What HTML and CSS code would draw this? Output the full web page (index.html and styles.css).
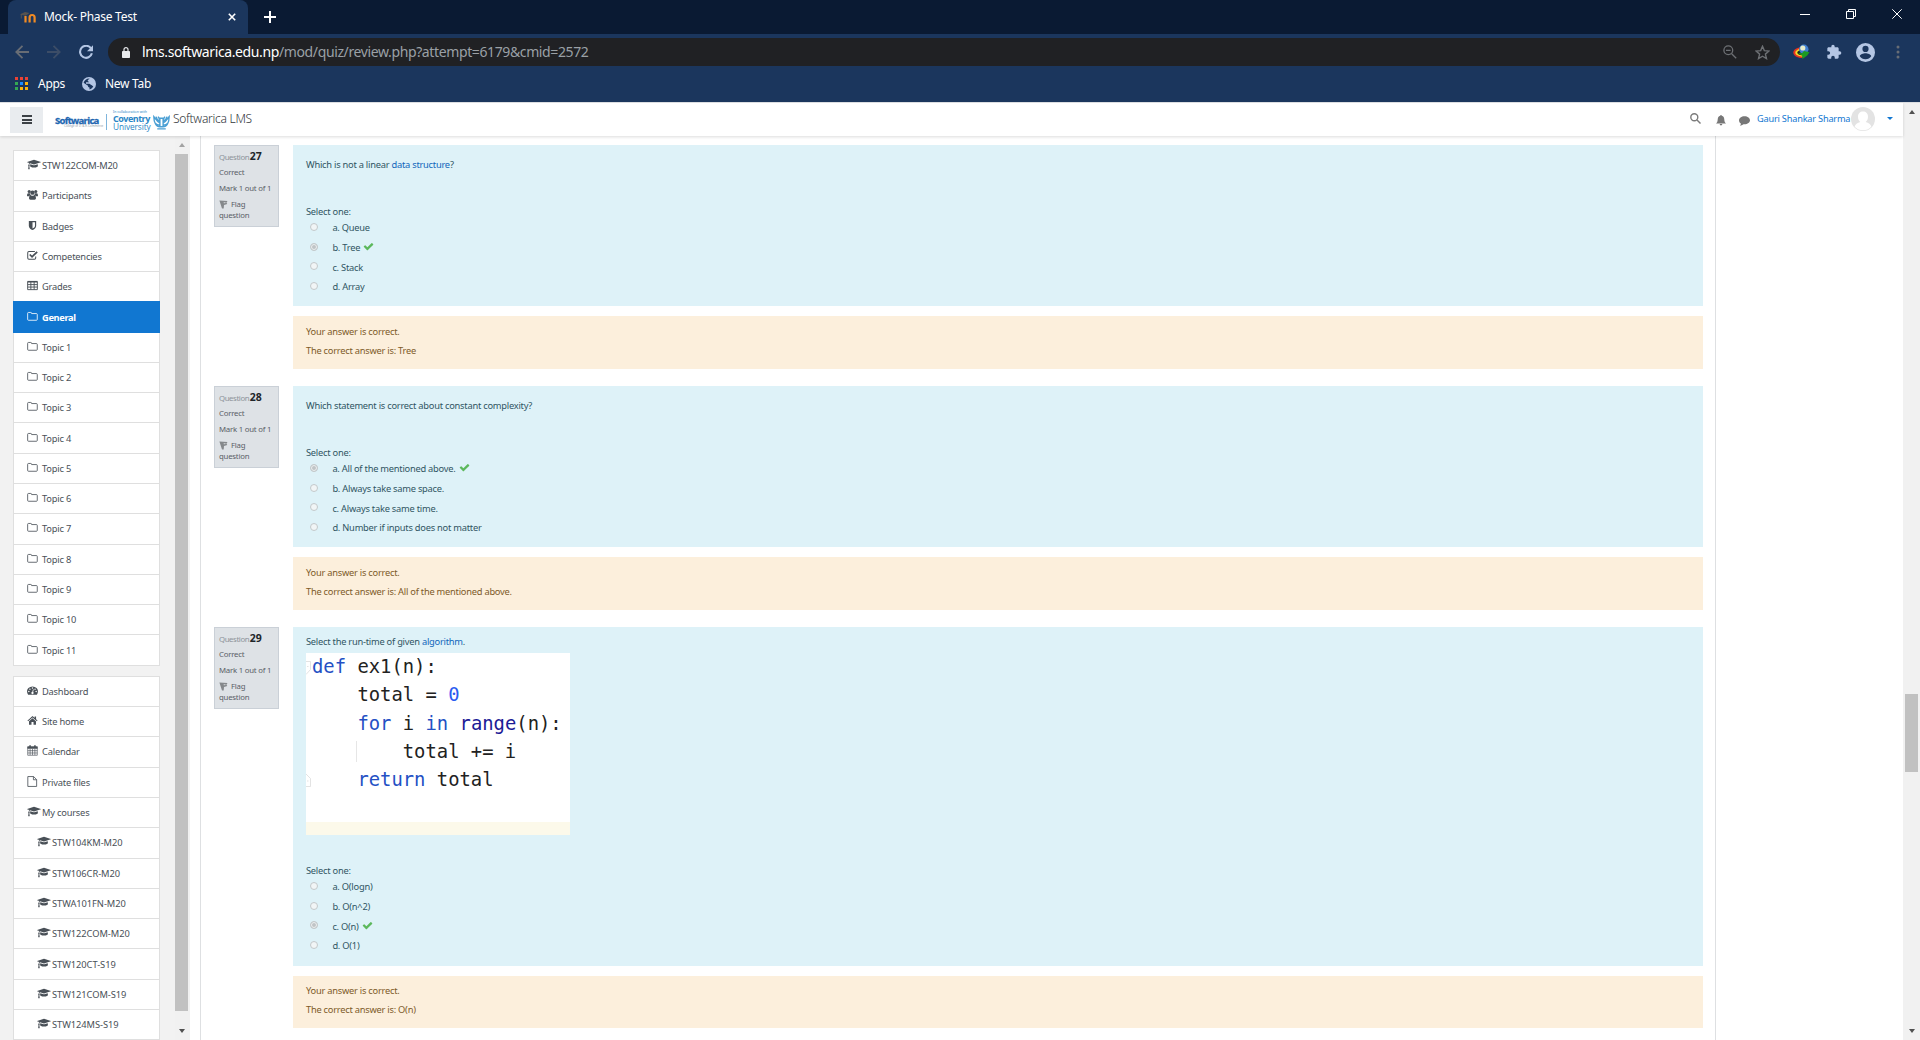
FILE: index.html
```html
<!DOCTYPE html>
<html lang="en">
<head>
<meta charset="utf-8">
<title>Mock- Phase Test</title>
<link rel="stylesheet" href="styles.css">
</head>
<body>
<svg class="sprite" aria-hidden="true">
  <symbol id="cap" viewBox="0 0 2304 1792"><path d="M1774 836l18 316q4 69-82 128t-235 93.500-323 34.500-323-34.500-235-93.500-82-128l18-316 574 181q22 7 48 7t48-7zm530-324q0 23-22 31l-1120 352q-4 1-10 1t-10-1l-652-206q-43 34-71 111.500t-34 178.500q63 36 63 109 0 69-58 107l58 433q2 14-8 25-9 11-24 11h-192q-15 0-24-11-10-11-8-25l58-433q-58-38-58-107 0-73 65-111 11-207 98-330l-333-104q-22-8-22-31t22-31l1120-352q4-1 10-1t10 1l1120 352q22 8 22 31z"/></symbol>
  <symbol id="users" viewBox="0 0 12 12"><circle cx="2.400" cy="2.700" r="1.700"/><circle cx="9.600" cy="2.700" r="1.700"/><circle cx="6" cy="4" r="2.400"/><path d="M0 7.500C0 5.500.6 4.700 1.400 4.700h1.900c0 1 .5 1.800 1 2.200C3 7 2.600 7.500 2.300 8H.9C.3 8 0 7.900 0 7.500zM12 7.500c0-2-.6-2.800-1.400-2.800H8.700c0 1-.5 1.800-1 2.200 1.300.1 1.700.6 2 1.100h1.400c.6 0 .9-.1.900-.5zM2.200 10.200C2.200 8 3 6.700 4.300 6.700c1 .8 2.400.8 3.400 0 1.300 0 2.100 1.300 2.100 3.500 0 .9-.6 1.500-1.500 1.500H3.700c-.9 0-1.500-.6-1.500-1.500z"/></symbol>
  <symbol id="shield" viewBox="0 0 12 12"><path fill-rule="evenodd" d="M2 1h8v5.500c0 2-2 3.700-4 4.500-2-.8-4-2.500-4-4.500zM6 2.400v7C7.400 8.700 8.700 7.600 8.700 6.500V2.400z"/></symbol>
  <symbol id="checksq" viewBox="0 0 12 12"><path fill="none" stroke="currentColor" stroke-width="1.100" d="M9.500 7v1.800c0 .8-.5 1.300-1.300 1.300H2.100C1.300 10.100.8 9.600.8 8.800V2.900c0-.8.500-1.300 1.300-1.300h6.500"/><path fill="none" stroke="currentColor" stroke-width="1.900" d="M3 4.900l2.500 2.500 5.600-5.400"/></symbol>
  <symbol id="table" viewBox="0 0 12 12"><path fill="none" stroke="currentColor" d="M.7 2h10.600v8.500H.7zM.7 5h10.600M.7 7.700h10.600M4.200 2v8.500M7.800 2v8.500"/><path d="M.5 1h11v1.500H.5z"/></symbol>
  <symbol id="folder" viewBox="0 0 12 12"><path fill="none" stroke="currentColor" stroke-width=".9" d="M.7 2.500c0-.6.300-.9.900-.9h2.500c.6 0 .9.300.9.900v.3h5.300c.6 0 .9.400.9.900v5.500c0 .6-.3.900-.9.900H1.600c-.6 0-.9-.3-.9-.9z"/></symbol>
  <symbol id="gauge" viewBox="0 0 12 12"><path fill-rule="evenodd" d="M1.200 10.500C-.5 8.200-.3 5.300 1.600 3.400a6.200 6.200 0 018.800 0c1.900 1.900 2.100 4.800.4 7.100zM2 6.400a.8.800 0 100 1.600.8.800 0 000-1.600zM3.200 3.700a.8.800 0 100 1.600.8.800 0 000-1.600zM6 2.500a.8.800 0 100 1.600.8.800 0 000-1.600zM8.800 3.700a.8.800 0 100 1.600.8.800 0 000-1.600zM10 6.400a.8.800 0 100 1.600.8.800 0 000-1.600zM6.600 4.700l-.9 2.800a1.200 1.200 0 101 .2l.6-2.800z"/></symbol>
  <symbol id="home" viewBox="0 0 12 12"><path d="M6 1.200l5.500 4.700-.7.800L6 2.700l-4.800 4-.7-.8L2.200 4.500zM8.300 1.500h1.600v3L8.300 3.200z"/><path d="M2.200 6.700L6 3.500l3.800 3.200v3.800H7.100V7.700H4.900v2.800H2.200z"/></symbol>
  <symbol id="calendar" viewBox="0 0 12 12"><path fill="none" stroke="currentColor" stroke-width=".7" d="M.8 2h10.400v9.200H.8zM.8 6.200h10.400M.8 8.700h10.400M3.400 4v7M6 4v7M8.600 4v7"/><path d="M.5 1.700h11v2.300H.5zM2.500.2h1.700v2.500H2.500zM7.800.2h1.700v2.500H7.800z"/></symbol>
  <symbol id="file" viewBox="0 0 12 12"><path fill="none" stroke="currentColor" stroke-width=".9" d="M.9.600h6.300l3.300 3.300v7.500H.9zM7 .6v3.500h3.500"/></symbol>
  <symbol id="check" viewBox="0 0 1792 1792"><path d="M1671 566q0 40-28 68l-724 724-136 136q-28 28-68 28t-68-28l-136-136-362-362q-28-28-28-68t28-68l136-136q28-28 68-28t68 28l294 295 656-657q28-28 68-28t68 28l136 136q28 28 28 68z"/></symbol>
  <symbol id="flag" viewBox="0 0 9 9"><path fill="#85888b" d="M.4.500l8.100.5-1.100 1.700.9 1.300-3.300 1-.3 3.500H3z"/><path fill="#c3c6c9" d="M4.600 2h2.200l-.6 1.300H4.700z"/></symbol>
</svg>

<header class="chrome">
  <div class="tabstrip">
    <div class="tab">
      <svg class="favicon" viewBox="0 0 16 12"><path fill="none" stroke="#f08a24" stroke-width="2.200" d="M5.500 11.500V5M9.600 11.500V6.500a2.500 2.500 0 015 0v5"/><path fill="#55524f" d="M.2 3.300L5 .9l4.500 1-3.800 2.900L1.800 4v3.500h-1V3.700z"/></svg>
      <span class="tab-title">Mock- Phase Test</span>
      <svg class="tab-close" viewBox="0 0 8 8"><path d="M.8.800l6.400 6.400M7.200.8L.8 7.200"/></svg>
    </div>
    <svg class="newtab" viewBox="0 0 12 12"><path d="M6 0v12M0 6h12"/></svg>
    <div class="winctl">
      <svg viewBox="0 0 10 10"><path d="M0 5.500h10"/></svg>
      <svg viewBox="0 0 10 10"><path d="M.5 2.500h7v7h-7zM2.500 2.500v-2h7v7h-2"/></svg>
      <svg viewBox="0 0 10 10"><path d="M.3.300l9.400 9.400M9.700.3L.3 9.700"/></svg>
    </div>
  </div>
  <div class="toolbar">
    <svg class="nav back" viewBox="0 0 14 14"><path d="M14 7H1.500M7.500.8L1.300 7l6.200 6.200"/></svg>
    <svg class="nav fwd" viewBox="0 0 14 14"><path d="M0 7h12.500M6.500.8L12.700 7l-6.200 6.200"/></svg>
    <svg class="nav reload" viewBox="0 0 14 14"><path d="M11.900 3.200A6 6 0 1012.900 8.300"/><path class="fill" d="M14 .2v6H8z"/></svg>
    <div class="omnibox">
      <svg class="lock" viewBox="0 0 8 11"><path d="M.8 4h6.400c.5 0 .8.300.8.800v5.400c0 .5-.3.800-.8.800H.8c-.5 0-.8-.3-.8-.8V4.800C0 4.300.3 4 .8 4z"/><path class="line" d="M2 4.300V2.600a2 2 0 014 0v1.700"/></svg>
      <span class="url"><b>lms.softwarica.edu.np</b>/mod/quiz/review.php?attempt=6179&amp;cmid=2572</span>
      <svg class="zoomout" viewBox="0 0 14 14"><circle cx="5.300" cy="5.300" r="4.400"/><path d="M3 5.300h4.600M8.700 8.700l4.500 4.500"/></svg>
      <svg class="star" viewBox="0 0 14 14"><path d="M7 1.200l1.700 4 4.300.4-3.300 2.900 1 4.200L7 10.500l-3.700 2.200 1-4.200L1 5.600l4.300-.4z"/></svg>
    </div>
    <svg class="idm" viewBox="0 0 17 16"><path d="M8 3C3 4 0 6 .3 9s5 5 9.200 5" fill="#e53322"/><path d="M8 4.500C4 5.500 2 7 2.300 9s4 3.500 7.700 3.500" fill="#f7dc28"/><path d="M8 6C5.500 6.500 4 7.500 4.300 9S7 11.500 10 11" fill="#182b22"/><circle cx="10.800" cy="5.300" r="4.700" fill="#3f7fd0"/><circle cx="9.800" cy="4" r="2.600" fill="#e6eccb"/><path d="M5 9l4 .2L11 7l5.500 1.200-2.300 3.200L9.500 15l-.3-3.200z" fill="#1d9a21"/></svg>
    <svg class="puzzle" viewBox="0 0 24 24"><path d="M20.500 11H19V7c0-1.100-.9-2-2-2h-4V3.500a2.500 2.500 0 00-5 0V5H4c-1.100 0-2 .9-2 2v3.800h1.500a2.700 2.700 0 010 5.400H2V20c0 1.100.9 2 2 2h3.800v-1.500a2.700 2.700 0 015.400 0V22H17c1.100 0 2-.9 2-2v-4h1.500a2.500 2.500 0 000-5z"/></svg>
    <svg class="person" viewBox="0 0 20 20"><path fill-rule="evenodd" d="M10 0a10 10 0 100 20 10 10 0 000-20zm0 3a3.200 3.200 0 110 6.500A3.200 3.200 0 0110 3zm0 14.200a7 7 0 01-6-3.200c0-2 4-3.100 6-3.100s6 1.100 6 3.100a7 7 0 01-6 3.200z"/></svg>
    <svg class="dots" viewBox="0 0 4 14"><circle cx="2" cy="2" r="1.500"/><circle cx="2" cy="7" r="1.500"/><circle cx="2" cy="12" r="1.500"/></svg>
  </div>
  <div class="bookmarks">
    <svg class="apps" viewBox="0 0 13 13"><path fill="#ea4335" d="M0 0h3v3H0zM5 0h3v3H5zM10 0h3v3h-3z"/><path fill="#34a853" d="M0 5h3v3H0zM0 10h3v3H0z"/><path fill="#1a8cff" d="M5 5h3v3H5z"/><path fill="#fbb30b" d="M10 5h3v3h-3zM5 10h3v3H5zM10 10h3v3h-3z"/></svg>
    <span class="bm-apps">Apps</span>
    <svg class="globe" viewBox="0 0 14 14"><circle cx="7" cy="7" r="7" fill="#b4c6e4"/><path fill="#1b365d" d="M7.500 1.500c-.3 1.200-1.800 1-1.800 2.200 0 .8 1.300.6 1.300 1.600H4v1.500h3.300c1 0 1 1.200 2 1.200.9 0 .8 1 2 1.200-.6 1.600-2 2.800-3.800 3.200V10.500c-1.200 0-1.500-.8-1.500-1.700L1.600 5.800C2.400 3.200 4.700 1.400 7.500 1.500z"/></svg>
    <span>New Tab</span>
  </div>
</header>

<div class="viewport">
  <div class="page">
    <nav class="navbar">
      <button class="burger"><i></i><i></i><i></i></button>
      <div class="logo">
        <div class="soft"><b>Softwarica</b><small>College of IT &amp; E-Commerce</small></div>
        <i class="bar"></i>
        <div class="cov"><small>In collaboration with</small><b>Coventry</b><span>University</span></div>
        <svg class="wings" viewBox="0 0 16 16"><g fill="none" stroke="#4a9fd4" stroke-width="1.300"><path d="M6.500 12C3 12 .8 8 .8 2.500 3 5 3.500 7 6 8M2.800 2.500C3.500 5 4.500 6 6 6.500M4.800 2.500L6.300 5M9.500 12c3.500 0 5.700-4 5.700-9.500C13 5 12.500 7 10 8M13.200 2.500C12.500 5 11.500 6 10 6.500M11.200 2.500L9.700 5M2 8.500c1 1.500 2.500 2 4.500 2M14 8.500c-1 1.500-2.500 2-4.500 2M6.500 4h3v8h-3zM4 14h8"/></g></svg>
      </div>
      <span class="brand">Softwarica LMS</span>
      <div class="usermenu">
        <svg class="search" viewBox="0 0 11 11"><circle cx="4.300" cy="4.300" r="3.500"/><path d="M7 7l3.500 3.500"/></svg>
        <svg class="bell" viewBox="0 0 10 11"><path d="M5 0c.5 0 .8.300.8.800C7.500 1.200 8.200 2.600 8.300 4.500c.1 2 .6 3 1.700 4H0c1.100-1 1.600-2 1.700-4C1.800 2.600 2.500 1.200 4.200.8 4.200.3 4.500 0 5 0zM3.700 9h2.600c0 .8-.5 1.400-1.300 1.400S3.700 9.800 3.700 9z"/></svg>
        <svg class="chat" viewBox="0 0 11 10"><path d="M5.500.3C8.600.3 11 2 11 4.300s-2.400 4-5.500 4l-1-.1C3.500 9 2.200 9.600.9 9.700c.6-.6 1-1.300 1-2.100C.7 6.800 0 5.700 0 4.300 0 2 2.400.3 5.500.3z"/></svg>
        <a class="uname">Gauri Shankar Sharma</a>
        <svg class="avatar" viewBox="0 0 24 24"><circle cx="12" cy="12" r="12" fill="#e3e3e3"/><path fill="#fff" d="M12 4.500c3 0 5 2 5 5.200 0 2.300-1 4.300-2.300 5.300 3 .8 5 2.300 5.600 4.700a11.500 11.500 0 01-16.600 0C4.300 17.300 6.300 15.800 9.300 15 8 14 7 12 7 9.700c0-3.200 2-5.200 5-5.200z"/></svg>
        <i class="caret"></i>
      </div>
    </nav>
    <div class="columns">
      <aside class="drawer">
        <div class="menus">
          <ul class="menu">
            <li><svg class="wide"><use href="#cap"/></svg>STW122COM-M20</li>
            <li><svg><use href="#users"/></svg>Participants</li>
            <li><svg><use href="#shield"/></svg>Badges</li>
            <li><svg><use href="#checksq"/></svg>Competencies</li>
            <li><svg><use href="#table"/></svg>Grades</li>
            <li class="active"><svg><use href="#folder"/></svg>General</li>
            <li><svg><use href="#folder"/></svg>Topic 1</li>
            <li><svg><use href="#folder"/></svg>Topic 2</li>
            <li><svg><use href="#folder"/></svg>Topic 3</li>
            <li><svg><use href="#folder"/></svg>Topic 4</li>
            <li><svg><use href="#folder"/></svg>Topic 5</li>
            <li><svg><use href="#folder"/></svg>Topic 6</li>
            <li><svg><use href="#folder"/></svg>Topic 7</li>
            <li><svg><use href="#folder"/></svg>Topic 8</li>
            <li><svg><use href="#folder"/></svg>Topic 9</li>
            <li><svg><use href="#folder"/></svg>Topic 10</li>
            <li><svg><use href="#folder"/></svg>Topic 11</li>
          </ul>
          <ul class="menu">
            <li><svg><use href="#gauge"/></svg>Dashboard</li>
            <li><svg><use href="#home"/></svg>Site home</li>
            <li><svg><use href="#calendar"/></svg>Calendar</li>
            <li><svg><use href="#file"/></svg>Private files</li>
            <li><svg class="wide"><use href="#cap"/></svg>My courses</li>
            <li class="sub"><svg class="wide"><use href="#cap"/></svg>STW104KM-M20</li>
            <li class="sub"><svg class="wide"><use href="#cap"/></svg>STW106CR-M20</li>
            <li class="sub"><svg class="wide"><use href="#cap"/></svg>STWA101FN-M20</li>
            <li class="sub"><svg class="wide"><use href="#cap"/></svg>STW122COM-M20</li>
            <li class="sub"><svg class="wide"><use href="#cap"/></svg>STW120CT-S19</li>
            <li class="sub"><svg class="wide"><use href="#cap"/></svg>STW121COM-S19</li>
            <li class="sub"><svg class="wide"><use href="#cap"/></svg>STW124MS-S19</li>
          </ul>
        </div>
        <div class="scroll inner">
          <i class="up"></i><i class="thumb"></i><i class="down"></i>
        </div>
      </aside>
      <main class="content">
        <section class="que">
          <div class="info">
            <div class="no">Question <b>27</b></div>
            <div class="state">Correct</div>
            <div class="grade">Mark 1 out of 1</div>
            <div class="flag"><svg><use href="#flag"/></svg>Flag question</div>
          </div>
          <div class="body">
            <div class="formulation">
              <p class="qtext">Which is not a linear <a>data structure</a>?</p>
              <p class="prompt">Select one:</p>
              <div class="answer"><i class="radio"></i>a. Queue</div>
              <div class="answer"><i class="radio on"></i>b. Tree<svg><use href="#check"/></svg></div>
              <div class="answer"><i class="radio"></i>c. Stack</div>
              <div class="answer"><i class="radio"></i>d. Array</div>
            </div>
            <div class="outcome"><p>Your answer is correct.</p><p>The correct answer is: Tree</p></div>
          </div>
        </section>
        <section class="que">
          <div class="info">
            <div class="no">Question <b>28</b></div>
            <div class="state">Correct</div>
            <div class="grade">Mark 1 out of 1</div>
            <div class="flag"><svg><use href="#flag"/></svg>Flag question</div>
          </div>
          <div class="body">
            <div class="formulation">
              <p class="qtext">Which statement is correct about constant complexity?</p>
              <p class="prompt">Select one:</p>
              <div class="answer"><i class="radio on"></i>a. All of the mentioned above.<svg><use href="#check"/></svg></div>
              <div class="answer"><i class="radio"></i>b. Always take same space.</div>
              <div class="answer"><i class="radio"></i>c. Always take same time.</div>
              <div class="answer"><i class="radio"></i>d. Number if inputs does not matter</div>
            </div>
            <div class="outcome"><p>Your answer is correct.</p><p>The correct answer is: All of the mentioned above.</p></div>
          </div>
        </section>
        <section class="que">
          <div class="info">
            <div class="no">Question <b>29</b></div>
            <div class="state">Correct</div>
            <div class="grade">Mark 1 out of 1</div>
            <div class="flag"><svg><use href="#flag"/></svg>Flag question</div>
          </div>
          <div class="body">
            <div class="formulation code-q">
              <p class="qtext">Select the run-time of given <a>algorithm</a>.</p>
              <div class="snippet">
                <svg class="fold" viewBox="0 0 6 150"><path d="M0 8.500h4.500v8L0 21.500M1 13.500h1.500M0 121l4.500 4.500v8H0M1 128h1.500"/></svg>
                <div class="code">
                  <div><em>def</em> ex1(n):</div>
                  <div>    total = <u>0</u></div>
                  <div>    <em>for</em> i <em>in</em> <s>range</s>(n):</div>
                  <div>    <span class="guide">    total += i</span></div>
                  <div>    <em>return</em> total</div>
                </div>
              </div>
              <p class="prompt">Select one:</p>
              <div class="answer"><i class="radio"></i>a. O(logn)</div>
              <div class="answer"><i class="radio"></i>b. O(n^2)</div>
              <div class="answer"><i class="radio on"></i>c. O(n)<svg><use href="#check"/></svg></div>
              <div class="answer"><i class="radio"></i>d. O(1)</div>
            </div>
            <div class="outcome"><p>Your answer is correct.</p><p>The correct answer is: O(n)</p></div>
          </div>
        </section>
      </main>
    </div>
  </div>
  <div class="scroll outer">
    <i class="up"></i><i class="thumb"></i><i class="down"></i>
  </div>
</div>
</body>
</html>
```
FILE: styles.css
```css
* { box-sizing: border-box; }
html, body { margin: 0; height: 1040px; overflow: hidden; }
body {
  width: 1920px;
  display: flex;
  flex-direction: column;
  font-family: "Noto Sans", "Open Sans", sans-serif;
  background: #fff;
}
p, ul { margin: 0; padding: 0; list-style: none; }
svg { flex: none; display: block; }
.sprite { width: 0; height: 0; position: absolute; }

/* Browser frame */
.chrome { height: 103px; background: #1b365d; color: #fff; flex: none; border-bottom: 1px solid #dcdee1; }
.tabstrip { height: 34px; background: #0a1a33; display: flex; align-items: flex-start; padding-left: 8px; }
.tab { width: 240px; height: 34px; background: #1b365d; border-radius: 8px 8px 0 0; display: flex; align-items: center; padding: 0 12px; }
.favicon { width: 16px; height: 12px; }
.tab-title { margin-left: 8px; font-size: 12px; letter-spacing: -0.27px; white-space: nowrap; line-height: 33px; height: 34px; }
.tab-close { width: 8px; height: 8px; margin-left: auto; }
.tab-close path, .newtab path { stroke: #fff; stroke-width: 1.600; fill: none; }
.newtab { width: 12px; height: 12px; margin: 11px 0 0 16px; }
.newtab path { stroke-width: 2; }
.winctl { margin-left: auto; display: flex; gap: 36px; padding: 9px 18px 0 0; }
.winctl svg { width: 10px; height: 10px; }
.winctl path { stroke: #fff; fill: none; }

.toolbar { height: 36px; display: flex; align-items: center; padding-left: 15px; }
.nav { width: 14px; height: 14px; fill: none; stroke-width: 1.800; }
.back { stroke: #686d75; }
.fwd { stroke: #3c4d67; margin-left: 18px; }
.reload { stroke: #b4c6e4; margin-left: 18px; stroke-width: 2.100; }
.reload .fill { fill: #b4c6e4; stroke: none; }
.omnibox { width: 1672px; height: 28px; margin-left: 15px; background: #202124; border-radius: 14px; display: flex; align-items: center; padding: 0 10px 0 14px; }
.lock { width: 8px; height: 11px; fill: #e8eaed; }
.lock .line { fill: none; stroke: #e8eaed; stroke-width: 1.200; }
.url { margin-left: 12px; font-size: 14px; letter-spacing: -0.38px; color: #9aa0a6; line-height: 28px; }
.url b { font-weight: 400; color: #fff; }
.zoomout { width: 14px; height: 14px; margin-left: auto; }
.star { width: 15px; height: 15px; margin-left: 18px; }
.zoomout, .star { fill: none; stroke: #6d7074; stroke-width: 1.300; }
.idm { width: 17px; height: 16px; margin-left: 13px; }
.puzzle { width: 16px; height: 16px; margin-left: 16px; fill: #b4c6e4; }
.person { width: 19px; height: 19px; margin-left: 14px; fill: #b4c6e4; }
.dots { width: 4px; height: 14px; margin-left: 21px; fill: #686d75; }

.bookmarks { height: 27px; display: flex; align-items: center; padding-left: 15px; font-size: 12px; letter-spacing: -0.28px; }
.bookmarks span { margin-top: -1px; }
.apps { width: 13px; height: 13px; margin-right: 10px; }
.bm-apps { width: 27px; }
.globe { width: 14px; height: 14px; margin: 0 9px 0 17px; }

/* Viewport */
.viewport { display: flex; height: 937px; overflow: hidden; }
.page { width: 1903px; display: flex; flex-direction: column; }
.navbar { height: 33px; flex: none; display: flex; align-items: center; padding: 0 10px; background: #fff; box-shadow: 0 1px 3px rgba(0,0,0,.14); position: relative; z-index: 2; }
.burger { width: 33px; height: 26px; border: 0; padding: 0; background: #e9ecef; display: flex; flex-direction: column; align-items: center; justify-content: center; gap: 1.600px; }
.burger i { width: 10px; height: 2px; background: #3c4146; }
.logo { display: flex; align-items: center; height: 24px; margin-left: 12px; color: #2f6db5; line-height: 1; }
.soft { width: 45px; display: flex; flex-direction: column; padding-top: 5px; }
.soft b { font: 700 9.500px/9px "Open Sans", sans-serif; letter-spacing: -0.7px; -webkit-text-stroke: .3px #2065b0; color: #2065b0; }
.soft small { font-size: 3px; line-height: 3px; padding-left: 9px; white-space: nowrap; color: #8d98a5; }
.bar { width: 1px; height: 16px; background: #7fb5dc; margin: 5px 6px 0; }
.cov { width: 39px; color: #2a86c6; }
.cov small, .cov b, .cov span { display: block; white-space: nowrap; }
.cov small { font-size: 3.500px; line-height: 5px; }
.cov b { font: 700 9px/9px "Open Sans", sans-serif; letter-spacing: -0.5px; }
.cov span { font: 8.300px/8px "Open Sans", sans-serif; letter-spacing: -0.1px; }
.wings { width: 17px; height: 17px; margin: 5px 0 0 1px; }
.brand { margin: -3px 0 0 3px; font-size: 12px; letter-spacing: -0.27px; color: #303438; font-weight: 300; }
.usermenu { margin-left: auto; display: flex; align-items: center; }
.search { width: 11px; height: 11px; fill: none; stroke: #7b7b7b; stroke-width: 1.400; margin-top: -3px; }
.bell { width: 10px; height: 11px; fill: #777; margin: 1px 0 0 15px; }
.chat { width: 11px; height: 10px; fill: #777; margin: 2px 0 0 13px; }
.uname { color: #1177d1; font-size: 9.200px; letter-spacing: -0.2px; margin: -3px 0 0 7px; width: 92px; white-space: nowrap; }
.avatar { width: 24px; height: 24px; margin: -1px 0 0 2px; }
.caret { border: 3px solid transparent; border-top-color: #1177d1; border-bottom: 0; margin: -3px 0 0 12px; }

.columns { display: flex; height: 904px; }
.drawer { width: 190px; background: #f2f2f2; display: flex; overflow: hidden; flex: none; }
.menus { padding: 14px 0 0 13px; width: 175px; }
.menu { width: 147px; border: 1px solid #dfdfdf; background: #fff; margin-bottom: 10px; }
.menu li { height: 30.310px; padding-left: 13px; border-bottom: 1px solid #dfdfdf; display: flex; align-items: center; font-size: 9.300px; letter-spacing: -0.2px; color: #495057; white-space: nowrap; }
.menu li:last-child { border-bottom: 0; height: 29.310px; }
.menu .sub { padding-left: 23px; letter-spacing: -0.05px; }
.menu svg { width: 11px; height: 11px; margin: -2px 4px 0 0; fill: currentColor; color: #495057; }
.menu svg.wide { width: 14px; margin-right: 1px; }
.menu .active { background: #1177d1; color: #fff; font-weight: 700; margin: -1px; width: 147px; padding-left: 14px; height: 32px; border: 0; letter-spacing: -0.35px; z-index: 1; }
.menu .active svg { color: #fff; }

.scroll { display: flex; flex-direction: column; align-items: center; background: #f1f1f1; }
.scroll .up, .scroll .down { width: 0; height: 0; border: 3.500px solid transparent; flex: none; }
.scroll .up { border-bottom: 4px solid #505050; border-top: 0; }
.scroll .down { border-top: 4px solid #505050; border-bottom: 0; }
.scroll .thumb { width: 13px; background: #c1c1c1; }
.inner { width: 15px; padding: 7px 2px 7px 0; justify-content: space-between; }
.inner .up { border-bottom-color: #a3a3a3; }
.inner .thumb { height: 857px; margin-top: -12px; }
.outer { width: 17px; padding-top: 7px; }
.outer .thumb { height: 78px; margin-top: 580px; }
.outer .down { margin-top: 257px; }

/* Quiz */
.content { margin-left: 10px; width: 1516px; border: solid #dee0e2; border-width: 0 1px; padding: 9px 0 0 13px; display: flex; flex-direction: column; gap: 17px; }
.que { display: flex; align-items: flex-start; gap: 14px; }
.info { width: 65px; height: 82px; background: #dee2e6; border: 1px solid #cad0d7; padding: 2px 0 0 4px; font-size: 7.800px; letter-spacing: -0.23px; color: #5a6066; white-space: nowrap; }
.info .no { line-height: 16px; height: 16px; color: #8d939a; letter-spacing: -0.4px; }
.info .no b { font-size: 10.500px; letter-spacing: 0; color: #212529; margin-left: -1px; }
.info .state { line-height: 16px; }
.info .grade { line-height: 16px; }
.info .flag { line-height: 11px; padding-top: 3px; white-space: normal; width: 50px; }
.info .flag svg { width: 9px; height: 9px; display: inline-block; margin-right: 3px; vertical-align: -2px; }
.body { width: 1410px; display: flex; flex-direction: column; gap: 10px; font-size: 9.300px; letter-spacing: -0.24px; }
.formulation { height: 161px; background: #def2f8; color: #305563; padding: 13px 13px 0; }
.formulation a { color: #1166bb; }
.qtext, .prompt { line-height: 14px; height: 14px; }
.prompt { margin-top: 33px; }
.answer { height: 19.700px; display: flex; align-items: center; }
.prompt + .answer { margin-top: -1px; }
.radio { width: 8px; height: 8px; border: 1px solid #c3c9cb; border-radius: 50%; background: #f1f5f6; margin: -2px 14.400px 0 4px; }
.radio.on { background: #bfc4c6; box-shadow: inset 0 0 0 1px #eef1f2; }
.answer svg { width: 11px; height: 11px; fill: #5cb85c; margin: -2px 0 0 3px; }
.outcome { height: 53px; background: #fcefdc; color: #7d5a29; padding: 9px 13px 0; }
.outcome p { line-height: 14px; margin-bottom: 5px; }
.code-q { height: 339px; padding-top: 8px; }
.code-q + .outcome { height: 52px; padding-top: 8px; }
.code-q .prompt { margin-top: 29px; }
.snippet { width: 264px; height: 182px; margin-top: 4px; background: linear-gradient(#fff 169px, #fcf9ea 169px); position: relative; padding: 0 0 0 6px; }
.fold { position: absolute; left: 0; top: 0; width: 6px; height: 150px; fill: none; stroke: #dcdcdc; stroke-width: .8; }
.code { font: 18.850px/28.300px "DejaVu Sans Mono", monospace; letter-spacing: 0; color: #222; }
.code div { white-space: pre; height: 28.300px; }
.code em { font-style: normal; color: #2450c4; }
.code u { text-decoration: none; color: #2b5cf0; }
.code s { text-decoration: none; color: #1b1b96; }
.guide { box-shadow: -1px 0 #e6e6e6; }
```
